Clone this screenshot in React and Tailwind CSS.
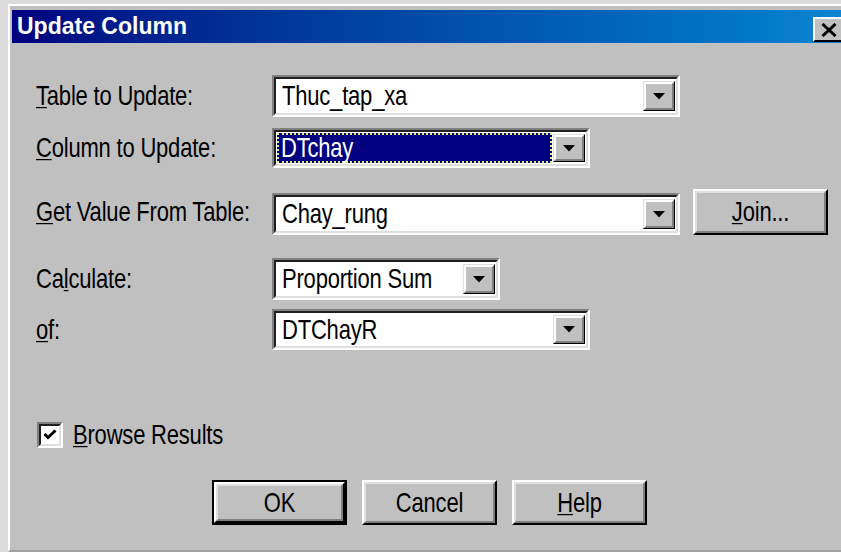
import React from 'react'

// Tall, narrow system-style text
function T({ children }) {
  return <span className="inline-block whitespace-nowrap scale-y-[1.22] tracking-[-0.2px]">{children}</span>
}

// Sunken 3D well, as used by combo boxes and check boxes
function Sunken({ className = '', children }) {
  return (
    <div className={`border-2 border-t-[#808080] border-l-[#808080] border-b-white border-r-white ${className}`}>
      <div className="h-full border-2 border-t-[#202020] border-l-[#202020] border-b-[#dfdfdf] border-r-[#dfdfdf] bg-white flex items-stretch">
        {children}
      </div>
    </div>
  )
}

// Raised 3D face for push buttons
function Raised({ className = '', children, isDefault = false }) {
  const face = (
    <div className="h-full border-2 border-t-white border-l-white border-b-[#000] border-r-[#000]">
      <div className="h-full border-2 border-t-[#dfdfdf] border-l-[#dfdfdf] border-b-[#808080] border-r-[#808080] bg-[#c0c0c0] flex items-center justify-center">
        {children}
      </div>
    </div>
  )
  if (isDefault) {
    return <div className={`border-2 border-black ${className}`}>{face}</div>
  }
  return <div className={className}>{face}</div>
}

function DropButton() {
  return (
    <div className="w-[32px] my-[2px] mr-[1px] border border-t-[#dfdfdf] border-l-[#dfdfdf] border-b-black border-r-black">
      <div className="h-full border-2 border-t-white border-l-white border-b-[#808080] border-r-[#808080] bg-[#c0c0c0] flex items-center justify-center">
        <svg width="12" height="7" viewBox="0 0 12 7">
          <polygon points="0,0 12,0 6,6.5" fill="#000" />
        </svg>
      </div>
    </div>
  )
}

function Combo({ width, value, focused = false }) {
  return (
    <Sunken className={`${width} h-full`}>
      <div className="flex-1 flex p-[1px]">
        {focused ? (
          <div className="flex-1 bg-[#000080] text-white border-2 border-dotted border-[#e8e880] flex items-center pl-[2px]">
            <T>{value}</T>
          </div>
        ) : (
          <div className="flex-1 flex items-center pl-[5px]"><T>{value}</T></div>
        )}
      </div>
      <DropButton />
    </Sunken>
  )
}

function Label({ children }) {
  return <div className="w-[236px] shrink-0"><T>{children}</T></div>
}

const Key = ({ children }) => <span className="underline underline-offset-[2px] decoration-1">{children}</span>

export default function App() {
  return (
    <div className="w-[841px] h-[552px] bg-[#dcdcdc] pt-[4px] pl-[8px] overflow-hidden font-['Liberation_Sans',sans-serif] text-[22px] leading-none text-black">
      <div className="h-full border-t-2 border-l-2 border-white border-b-2 border-b-[#a0a0a0] bg-[#c0c0c0] pt-[4px] pl-[2px] flex flex-col">
        {/* caption */}
        <div className="h-[33px] shrink-0 bg-linear-to-r from-[#000080] to-[#1084d0] flex items-center justify-between overflow-hidden">
          <span className="pl-[5px] font-bold text-[23px] text-white">Update Column</span>
          <div className="w-[31px] h-[25px] -mr-[3px] self-end mb-[1px] border-2 border-t-white border-l-white border-b-black border-r-black bg-[#c0c0c0] flex items-center justify-center">
            <svg width="16" height="14" viewBox="0 0 16 14">
              <path d="M1.5 1 L14.5 13 M14.5 1 L1.5 13" stroke="#000" strokeWidth="3" />
            </svg>
          </div>
        </div>

        {/* form */}
        <div className="flex-1 pt-[32px] pl-[24px] flex flex-col">
          <div className="h-[42px] flex items-center">
            <Label><Key>T</Key>able to Update:</Label>
            <Combo width="w-[408px]" value="Thuc_tap_xa" />
          </div>
          <div className="h-[40px] mt-[11px] flex items-center">
            <Label><Key>C</Key>olumn to Update:</Label>
            <Combo width="w-[318px]" value="DTchay" focused />
          </div>
          <div className="h-[46px] mt-[21px] flex items-center">
            <Label><Key>G</Key>et Value From Table:</Label>
            <div className="h-[42px] mt-[4px] flex">
              <Combo width="w-[408px]" value="Chay_rung" />
            </div>
            <Raised className="w-[135px] h-[46px] ml-[13px]">
              <T><Key>J</Key>oin...</T>
            </Raised>
          </div>
          <div className="h-[42px] mt-[23px] flex items-center">
            <Label>Ca<Key>l</Key>culate:</Label>
            <Combo width="w-[228px]" value="Proportion Sum" />
          </div>
          <div className="h-[41px] mt-[9px] flex items-center">
            <Label><Key>o</Key>f:</Label>
            <Combo width="w-[318px]" value="DTChayR" />
          </div>

          <div className="h-[26px] mt-[72px] ml-[1px] flex items-center">
            <Sunken className="w-[26px] h-[26px]">
              <div className="flex-1 flex items-center justify-center">
                <svg width="14" height="12" viewBox="0 0 14 12">
                  <path d="M1.5 5 L5 8.5 L12.5 1.5" stroke="#000" strokeWidth="3" fill="none" />
                </svg>
              </div>
            </Sunken>
            <span className="ml-[10px]"><T><Key>B</Key>rowse Results</T></span>
          </div>

          <div className="mt-[32px] ml-[176px] flex gap-[15px]">
            <Raised className="w-[135px] h-[45px]" isDefault>
              <T>OK</T>
            </Raised>
            <Raised className="w-[135px] h-[45px]">
              <T>Cancel</T>
            </Raised>
            <Raised className="w-[135px] h-[45px]">
              <T><Key>H</Key>elp</T>
            </Raised>
          </div>
        </div>
      </div>
    </div>
  )
}
